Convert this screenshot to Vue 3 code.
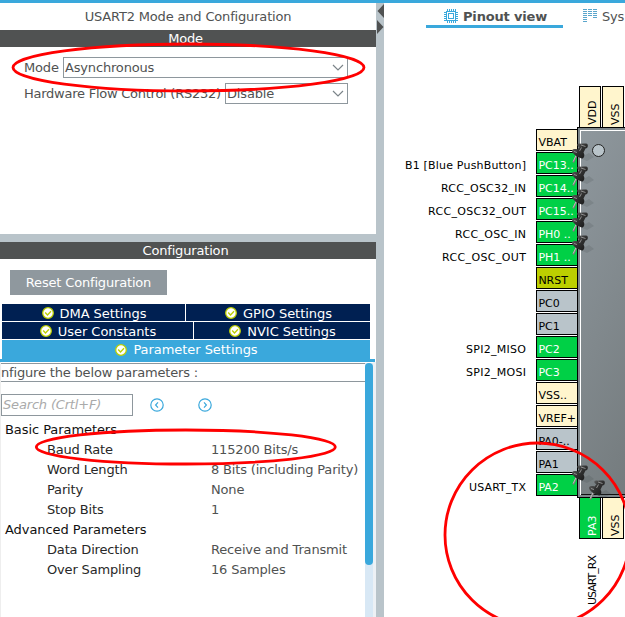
<script setup>
const leftPins = [
  { name: 'VBAT', kind: 'power' },
  { name: 'PC13..', kind: 'used', label: 'B1 [Blue PushButton]', pinned: true, w: 121 },
  { name: 'PC14..', kind: 'used', label: 'RCC_OSC32_IN', pinned: true, w: 85 },
  { name: 'PC15..', kind: 'used', label: 'RCC_OSC32_OUT', pinned: true, w: 98 },
  { name: 'PH0 ..', kind: 'used', label: 'RCC_OSC_IN', pinned: true, w: 71 },
  { name: 'PH1 ..', kind: 'used', label: 'RCC_OSC_OUT', pinned: true, w: 84 },
  { name: 'NRST', kind: 'nrst' },
  { name: 'PC0', kind: 'free' },
  { name: 'PC1', kind: 'free' },
  { name: 'PC2', kind: 'used', label: 'SPI2_MISO', w: 60 },
  { name: 'PC3', kind: 'used', label: 'SPI2_MOSI', w: 60 },
  { name: 'VSS..', kind: 'power' },
  { name: 'VREF+', kind: 'power' },
  { name: 'PA0-..', kind: 'free' },
  { name: 'PA1', kind: 'free' },
  { name: 'PA2', kind: 'used', label: 'USART_TX', pinned: true, w: 57 },
].map((p, i) => ({ ...p, y: 129 + i * 23 }))

const tacks = [
  ...leftPins.filter((p) => p.pinned).map((p) => ({ x: 572, y: p.y - 10 })),
  { x: 589, y: 479 },
]

const groups = [
  {
    title: 'Basic Parameters',
    rows: [
      ['Baud Rate', '115200 Bits/s'],
      ['Word Length', '8 Bits (including Parity)'],
      ['Parity', 'None'],
      ['Stop Bits', '1'],
    ],
  },
  {
    title: 'Advanced Parameters',
    rows: [
      ['Data Direction', 'Receive and Transmit'],
      ['Over Sampling', '16 Samples'],
    ],
  },
]

const tabRows = [
  [{ t: 'DMA Settings', c: 'w183' }, { t: 'GPIO Settings', c: 'fill' }],
  [{ t: 'User Constants', c: 'w191' }, { t: 'NVIC Settings', c: 'fill' }],
  [{ t: 'Parameter Settings', c: 'fill active' }],
]
</script>

<template>
  <div class="app">
    <div class="topline"></div>
    <div class="main">
      <section class="config">
        <div class="title">USART2 Mode and Configuration</div>
        <div class="bar">Mode</div>
        <div class="mode">
          <div class="field">
            <span>Mode</span>
            <div class="select wide">
              <span>Asynchronous</span>
              <svg width="12" height="7" viewBox="0 0 12 7"><path d="M1 1L6 6L11 1" /></svg>
            </div>
          </div>
          <div class="field">
            <span class="tight">Hardware Flow Control (RS232)</span>
            <div class="select">
              <span>Disable</span>
              <svg width="12" height="7" viewBox="0 0 12 7"><path d="M1 1L6 6L11 1" /></svg>
            </div>
          </div>
        </div>
        <div class="hsplit"></div>
        <div class="bar">Configuration</div>
        <button class="reset">Reset Configuration</button>
        <div class="tabs">
          <div v-for="(row, i) in tabRows" :key="i" class="tabrow">
            <div v-for="tab in row" :key="tab.t" class="tab" :class="tab.c">
              <svg width="12" height="12" viewBox="0 0 12 12">
                <circle cx="6" cy="6" r="5.3" fill="#fff" stroke="#bccf00" stroke-width="1.3" />
                <path d="M3.2 5.5L5.5 8L9 4.2" fill="none" stroke="#bccf00" stroke-width="1.3" />
              </svg>
              <span>{{ tab.t }}</span>
            </div>
          </div>
        </div>
        <div class="tabline"></div>
        <div class="params">
          <div class="content">
            <div class="hint">nfigure the below parameters :</div>
            <div class="searchrow">
              <div class="search">Search (Crtl+F)</div>
              <svg class="nav" width="14" height="14" viewBox="0 0 14 14">
                <circle cx="7" cy="7" r="6.2" /><path d="M8 4.4L5.6 7L8 9.6" />
              </svg>
              <svg class="nav next" width="14" height="14" viewBox="0 0 14 14">
                <circle cx="7" cy="7" r="6.2" /><path d="M6 4.4L8.4 7L6 9.6" />
              </svg>
            </div>
            <div class="tree">
              <template v-for="g in groups" :key="g.title">
                <div class="group">{{ g.title }}</div>
                <div v-for="r in g.rows" :key="r[0]" class="row">
                  <span class="key">{{ r[0] }}</span><span class="val">{{ r[1] }}</span>
                </div>
              </template>
            </div>
          </div>
          <div class="track"><div class="thumb"></div></div>
          <div class="gutter"></div>
        </div>
      </section>
      <div class="vsplit">
        <svg width="8" height="32" viewBox="0 0 8 32"><path d="M8 1V15L1.5 8Z M1 17V31L7.5 24Z" fill="#505252" /></svg>
      </div>
      <section class="pinout">
        <div class="viewtabs">
          <div class="view current">
            <svg width="14" height="14" viewBox="0 0 14 14" shape-rendering="crispEdges" fill="none" stroke="#3aa8dc">
              <path d="M2.5 2.5H11.5V11.5H2.5Z M4.5 4.5H9.5V9.5H4.5Z M3.5 0V2M5.5 0V2M7.5 0V2M9.5 0V2M11.5 0V2M3.5 12V14M5.5 12V14M7.5 12V14M9.5 12V14M11.5 12V14M0 3.5H2M0 5.5H2M0 7.5H2M0 9.5H2M0 11.5H2M12 3.5H14M12 5.5H14M12 7.5H14M12 9.5H14M12 11.5H14" />
            </svg>
            <span>Pinout view</span>
          </div>
          <div class="view">
            <svg width="14" height="14" viewBox="0 0 14 14" shape-rendering="crispEdges" fill="none" stroke="#5aa6cc">
              <path d="M0 .5H4M5 .5H9M10 .5H14M0 2.5H4M5 2.5H9M10 2.5H14M0 4.5H4M5 4.5H9M10 4.5H14M0 6.5H4M5 6.5H9M10 6.5H14M0 8.5H4M10 8.5H14M0 10.5H4M0 12.5H4" />
            </svg>
            <span>Sys</span>
          </div>
        </div>
        <svg class="chip" width="241" height="589" viewBox="384 28 241 589">
          <defs>
            <linearGradient id="body" x1="0" y1="0" x2="1" y2="1" gradientUnits="userSpaceOnUse" gradientTransform="translate(570 140) scale(170 330)">
              <stop offset="0" stop-color="#8f989e" /><stop offset="1" stop-color="#696f70" />
            </linearGradient>
            <linearGradient id="metal" x1="0" y1="0" x2="1" y2="1">
              <stop offset="0" stop-color="#777" /><stop offset=".45" stop-color="#333" /><stop offset="1" stop-color="#151515" />
            </linearGradient>
            <g id="tack">
              <path d="M8 16L17 11L22 15L15 19Z" fill="#30383c" opacity=".14" />
              <path d="M4.8 13L1.2 20.5" stroke="#777" stroke-width="1.8" />
              <path d="M4.3 13L1.2 19.5" stroke="#ddd" stroke-width=".7" />
              <path d="M0 9C0 7 3 6.5 5.5 7.5L7.5 5C5 4.5 4.5 1.5 7 1.5C10 2 13 1 15 1.8C16.5 3 16 6.5 13.5 6.5L11.5 10.5C13 12.5 12.5 15.5 10.5 16.5C7 16 .5 12.5 0 9Z" fill="url(#metal)" />
              <path d="M7.5 9L9.5 5.5M9 3L13.5 4.5M2 9.5L5 10.5" stroke="#999" stroke-width=".9" />
            </g>
          </defs>
          <g shape-rendering="crispEdges">
            <rect x="577" y="127" width="60" height="371" fill="#000" />
            <rect x="578" y="128" width="60" height="369" fill="#7d868a" />
            <rect x="580" y="130" width="60" height="365" fill="#fff" />
            <rect x="581" y="131" width="60" height="363" fill="url(#body)" />
            <rect x="581" y="494" width="60" height="1" fill="#111" />
            <rect v-for="p in leftPins" :key="p.name" x="536.5" :y="p.y + 0.5" width="41" height="21" :class="p.kind" />
            <rect x="579.5" y="86.5" width="21" height="41" class="power" />
            <rect x="602.5" y="86.5" width="21" height="41" class="power" />
            <rect x="579.5" y="497.5" width="21" height="41" class="used" />
            <rect x="602.5" y="497.5" width="21" height="41" class="power" />
          </g>
          <circle cx="598.5" cy="150.5" r="6" fill="#b9c4ca" stroke="#222" />
          <g v-for="p in leftPins" :key="p.name + 't'">
            <text x="538.4" :y="p.y + 17" :class="{ light: p.kind === 'used' }">{{ p.name }}</text>
            <text v-if="p.label" x="526" :y="p.y + 17" text-anchor="end" :textLength="p.w">{{ p.label }}</text>
          </g>
          <text transform="translate(596 125) rotate(-90)">VDD</text>
          <text transform="translate(619 125) rotate(-90)">VSS</text>
          <text class="light" transform="translate(596 536) rotate(-90)">PA3</text>
          <text transform="translate(619 536) rotate(-90)">VSS</text>
          <text transform="translate(596 605) rotate(-90)" textLength="50">USART_RX</text>
          <use v-for="(t, i) in tacks" :key="i" href="#tack" :x="t.x" :y="t.y" />
        </svg>
      </section>
    </div>
    <svg class="marks" width="625" height="617" viewBox="0 0 625 617">
      <ellipse cx="188.5" cy="67.5" rx="175.5" ry="23.5" />
      <ellipse cx="185.8" cy="447" rx="149.5" ry="17" />
      <ellipse cx="537.5" cy="535" rx="92.5" ry="92" />
    </svg>
  </div>
</template>

<style>
body { margin: 0; overflow: hidden; background: #fff; }
</style>

<style scoped>
.app { position: relative; width: 625px; height: 617px; overflow: hidden; font: 13px/17px "DejaVu Sans", sans-serif; letter-spacing: -0.17px; color: #505252; background: #fff; display: flex; flex-direction: column; white-space: nowrap; }
.app * { box-sizing: border-box; }
.topline { height: 3px; background: #3aa8dc; }
.main { display: flex; height: 614px; }
.config { width: 376px; display: flex; flex-direction: column; }
.title { height: 27px; line-height: 27px; text-align: center; }
.bar { height: 17px; background: #505252; color: #fff; text-align: center; padding-right: 5px; }
.mode { height: 187px; padding: 10px 28px 0 24px; display: flex; flex-direction: column; gap: 5px; }
.field { display: flex; justify-content: space-between; height: 21px; line-height: 21px; }
.tight { letter-spacing: -0.25px; }
.select { width: 123px; border: 1px solid #8e979d; line-height: 19px; padding: 0 3px 0 1px; display: flex; justify-content: space-between; align-items: center; }
.wide { width: 285px; }
.select path { fill: none; stroke: #7b8489; stroke-width: 1.2; }
.hsplit { height: 8px; background: #b9c4ca; }
.reset { margin: 11px 0 0 10px; width: 157px; height: 25px; padding: 0; border: 0; background: #8f989e; color: #fff; font: inherit; letter-spacing: inherit; line-height: 25px; }
.tabs { margin: 9px 6px 0 2px; display: flex; flex-direction: column; gap: 1px; letter-spacing: -0.05px; }
.tabrow { display: flex; gap: 1px; height: 17px; }
.tab { display: flex; align-items: center; justify-content: center; gap: 6px; background: #002052; color: #fff; padding: 1px 0 0 1px; }
.w183 { width: 183px; }
.w191 { width: 191px; }
.fill { flex: 1; }
.tabrow:last-child { height: 19px; }
.active { background: #3aa8dc; padding-top: 0; }
.tabline { height: 3px; width: 375px; background: #3aa8dc; }
.params { flex: 1; display: flex; border-left: 1px solid #eee; }
.content { width: 364px; padding-top: 1px; }
.hint { height: 19px; border-top: 1px solid #8e979d; border-bottom: 1px solid #8e979d; overflow: hidden; }
.searchrow { display: flex; align-items: center; margin-top: 12px; }
.search { width: 132px; height: 22px; border: 1px solid #8e979d; line-height: 20px; padding-left: 1px; font-style: italic; color: #aaa; }
.nav { margin-left: 17px; fill: none; stroke: #3aa8dc; stroke-width: 1.2; }
.next { margin-left: 34px; }
.tree { padding-top: 4px; line-height: 20px; color: #111; }
.group { padding-left: 4px; height: 20px; letter-spacing: -0.07px; }
.row { padding-left: 46px; height: 20px; display: flex; color: #282828; }
.key { width: 164px; }
.val { color: #505252; }
.track { width: 8px; background: #d8e8f5; margin-top: 1px; }
.thumb { height: 202px; border-radius: 4px; background: #3aa8dc; }
.gutter { width: 3px; background: #edf1f5; }
.vsplit { width: 8px; background: #b9c4ca; }
.pinout { width: 241px; }
.viewtabs { display: flex; padding-left: 42px; height: 25px; }
.view { display: flex; gap: 5px; align-items: center; padding: 1px 0 0 20px; }
.current { width: 137px; padding: 4px 0 0 18px; border-bottom: 3px solid #3aa8dc; font-weight: bold; }
.chip { display: block; letter-spacing: 0; }
.chip text { font: 11px "DejaVu Sans", sans-serif; fill: #000; }
.chip text.light { fill: #fff; }
.chip rect[class] { stroke: #000; }
.power { fill: #fff5cd; }
.used { fill: #00d046; }
.nrst { fill: #bccf00; }
.free { fill: #b9c4ca; }
.marks { position: absolute; left: 0; top: 0; pointer-events: none; fill: none; stroke: #f00; stroke-width: 2.8; }
</style>
